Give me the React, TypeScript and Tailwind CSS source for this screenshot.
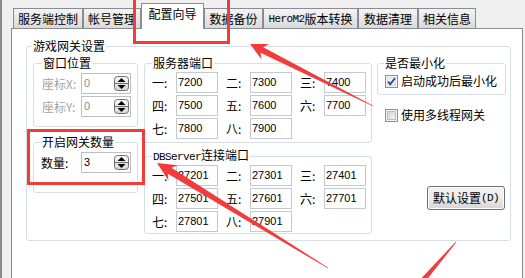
import React from 'react';

const CJK = "font-['Noto_Sans_CJK_SC','Noto_Sans_CJK_JP',sans-serif]";
const MONO = "font-['Liberation_Mono',monospace] text-[11px] tracking-[-0.6px]";
const RED = '#f23c3c';

function Spin() {
  return (
    <svg width="15" height="15" viewBox="0 0 15 15">
      <defs>
        <linearGradient id="sg" x1="0" y1="0" x2="0" y2="1">
          <stop offset="0" stopColor="#fafafa" />
          <stop offset="1" stopColor="#d4d4d4" />
        </linearGradient>
      </defs>
      <rect x="0.5" y="0.5" width="14" height="14" rx="3" fill="url(#sg)" stroke="#6e6e6e" />
      <line x1="1" y1="7.5" x2="14" y2="7.5" stroke="#6e6e6e" />
      <polygon points="3.5,6 11.5,6 7.5,2" fill="#000" />
      <polygon points="3.5,9 11.5,9 7.5,13" fill="#000" />
    </svg>
  );
}

function Check({ checked }: { checked?: boolean }) {
  return (
    <svg width="13" height="13" viewBox="0 0 13 13">
      <defs>
        <linearGradient id="cg" x1="0" y1="0" x2="1" y2="1">
          <stop offset="0" stopColor="#cfcfcf" />
          <stop offset="1" stopColor="#f7f7f7" />
        </linearGradient>
      </defs>
      <rect x="0.5" y="0.5" width="12" height="12" fill="#f4f4f4" stroke="#8e8f8f" />
      <rect x="2.5" y="2.5" width="8" height="8" fill={checked ? '#eef1f6' : 'url(#cg)'} stroke={checked ? '#d6dbe3' : '#bcbcbc'} />
      {checked && <path d="M3.2 6.6 L5.3 9.3 L9.9 3.2" stroke="#2a48a6" strokeWidth="1.9" fill="none" />}
    </svg>
  );
}

function SpinEdit({ value, disabled }: { value: string; disabled?: boolean }) {
  return (
    <div className="w-[50px] h-[21px] border border-[#b9bec7] bg-white flex items-center justify-between pl-[2px] pr-[1px]">
      <span className={`font-['Liberation_Sans',sans-serif] text-[11px] ${disabled ? 'text-[#8a8a8a]' : 'text-black'}`}>{value}</span>
      <Spin />
    </div>
  );
}

function PortCell({ label, value }: { label: string; value: string }) {
  return (
    <div className="flex items-center">
      <span className="w-[24px] text-[12px] leading-[14px]">{label}</span>
      <div className="w-[42px] h-[21px] border border-[#c3c8d1] bg-white flex items-center pl-[1px]">
        <span className="font-['Liberation_Sans',sans-serif] text-[11px]">{value}</span>
      </div>
    </div>
  );
}

function PortGrid({ rows }: { rows: [string, string][][] }) {
  return (
    <div className="flex flex-col gap-[2px] pl-[7px]">
      {rows.map((r, i) => (
        <div key={i} className="flex gap-[8px]">
          {r.map(([l, v]) => (
            <PortCell key={l} label={l} value={v} />
          ))}
        </div>
      ))}
    </div>
  );
}

function arrowPts(tx: number, ty: number, px: number, py: number, headLen: number, headW: number, shaftW: number) {
  const dx = px - tx;
  const dy = py - ty;
  const L = Math.hypot(dx, dy);
  const ux = dx / L;
  const uy = dy / L;
  const nx = -uy;
  const ny = ux;
  const b = (d: number, w: number) => `${tx + ux * d + nx * w},${ty + uy * d + ny * w}`;
  return [
    `${tx},${ty}`,
    b(headLen, headW),
    b(headLen * 0.78, shaftW / 2),
    `${px + nx * 0.4},${py + ny * 0.4}`,
    `${px - nx * 0.4},${py - ny * 0.4}`,
    b(headLen * 0.78, -shaftW / 2),
    b(headLen, -headW),
  ].join(' ');
}

const tabs: { label: React.ReactNode; cls: string; active?: boolean }[] = [
  { label: '服务端控制', cls: 'w-[70px]' },
  { label: '帐号管理', cls: 'w-[58px]' },
  { label: '配置向导', cls: 'w-[63px]', active: true },
  { label: '数据备份', cls: 'w-[59px]' },
  { label: <><span className={MONO}>HeroM2</span>版本转换</>, cls: 'w-[95px]' },
  { label: '数据清理', cls: 'w-[60px]' },
  { label: '相关信息', cls: 'w-[58px]' },
];

export default function App() {
  return (
    <div className={`relative w-[525px] h-[278px] overflow-hidden bg-[#f0f0f0] border-l-2 border-[#8a8a8a] text-black ${CJK}`}>
      {/* Tab strip */}
      <div className="h-[28px] ml-[11px] flex items-end">
        {tabs.map((t, i) =>
          t.active ? (
            <div
              key={i}
              className={`${t.cls} relative z-10 h-[26px] mb-[-1px] bg-white border border-b-0 border-[#898c95] flex justify-center pt-[3px] text-[12px] leading-[14px]`}
            >
              {t.label}
            </div>
          ) : (
            <div
              key={i}
              className={`${t.cls} h-[20px] bg-gradient-to-b from-[#f4f4f4] to-[#dadada] border border-b-0 border-[#898c95] flex items-center justify-center text-[12px] leading-[14px]`}
            >
              {t.label}
            </div>
          )
        )}
      </div>

      {/* Panel */}
      <div className="ml-[9px] w-[512px] h-[260px] bg-white border border-[#898c95] pt-[10px] pl-[14px]">
        <fieldset className="w-[485px] h-[202px] border border-[#d5dfe5] rounded-[3px] p-0 m-0 min-w-0">
          <legend className="ml-[5px] px-[1px] text-[12px] leading-[14px]">游戏网关设置</legend>
          <div className="flex ml-[6px] mt-[3px]">
            {/* Left column */}
            <div className="w-[105px] flex flex-col">
              <fieldset className="w-[105px] h-[71px] border border-[#d5dfe5] rounded-[3px] p-0 m-0 min-w-0">
                <legend className="ml-[8px] px-[1px] text-[12px] leading-[14px]">窗口位置</legend>
                <div className="flex flex-col gap-[2px] mt-[3px] pl-[8px]">
                  <div className="flex items-center">
                    <span className="w-[39px] text-[12px] leading-[14px] text-[#a3a3a3]">座标X:</span>
                    <SpinEdit value="0" disabled />
                  </div>
                  <div className="flex items-center">
                    <span className="w-[39px] text-[12px] leading-[14px] text-[#a3a3a3]">座标Y:</span>
                    <SpinEdit value="0" disabled />
                  </div>
                </div>
              </fieldset>
              <fieldset className="w-[105px] h-[58px] mt-[8px] border border-[#d5dfe5] rounded-[3px] p-0 m-0 min-w-0">
                <legend className="ml-[7px] px-[1px] text-[12px] leading-[14px]">开启网关数量</legend>
                <div className="flex items-center mt-[3px] pl-[7px]">
                  <span className="w-[40px] text-[12px] leading-[14px]">数量:</span>
                  <SpinEdit value="3" />
                </div>
              </fieldset>
            </div>

            {/* Middle column */}
            <div className="w-[228px] ml-[6px] flex flex-col">
              <fieldset className="w-[228px] h-[87px] border border-[#d5dfe5] rounded-[3px] p-0 m-0 min-w-0">
                <legend className="ml-[7px] px-[1px] text-[12px] leading-[14px]">服务器端口</legend>
                <div className="mt-[2px]">
                  <PortGrid
                    rows={[
                      [['一:', '7200'], ['二:', '7300'], ['三:', '7400']],
                      [['四:', '7500'], ['五:', '7600'], ['六:', '7700']],
                      [['七:', '7800'], ['八:', '7900']],
                    ]}
                  />
                </div>
              </fieldset>
              <fieldset className="w-[228px] h-[86px] mt-[5px] border border-[#d5dfe5] rounded-[3px] p-0 m-0 min-w-0">
                <legend className="ml-[7px] px-[1px] text-[12px] leading-[14px]">
                  <span className={MONO}>DBServer</span>连接端口
                </legend>
                <div className="mt-[1px]">
                  <PortGrid
                    rows={[
                      [['一:', '27201'], ['二:', '27301'], ['三:', '27401']],
                      [['四:', '27501'], ['五:', '27601'], ['六:', '27701']],
                      [['七:', '27801'], ['八:', '27901']],
                    ]}
                  />
                </div>
              </fieldset>
            </div>

            {/* Right column */}
            <div className="w-[129px] ml-[5px] flex flex-col">
              <fieldset className="w-[129px] h-[39px] border border-[#d5dfe5] rounded-[3px] p-0 m-0 min-w-0">
                <legend className="ml-[6px] px-[1px] text-[12px] leading-[14px]">是否最小化</legend>
                <div className="flex items-center gap-[3px] mt-[3px] pl-[7px] h-[16px]">
                  <Check checked />
                  <span className="text-[12px] leading-[14px]">启动成功后最小化</span>
                </div>
              </fieldset>
              <div className="flex items-center gap-[3px] mt-[12px] pl-[8px] h-[16px]">
                <Check />
                <span className="text-[12px] leading-[14px]">使用多线程网关</span>
              </div>
              <button className="ml-[50px] mt-[63px] w-[78px] h-[24px] border border-[#707070] rounded-[3px] bg-gradient-to-b from-[#f3f3f3] via-[#ebebeb] to-[#d5d5d5] shadow-[inset_0_0_0_1px_#fcfcfc] flex items-center justify-center text-[12px] leading-[14px]">
                默认设置<span className={MONO}>(D)</span>
              </button>
            </div>
          </div>
        </fieldset>
      </div>

      {/* Annotations */}
      <div className="absolute left-[131px] top-[-3px] w-[97px] h-[47px] border-[3px] border-[#f23c3c] pointer-events-none" />
      <div className="absolute left-[25px] top-[129px] w-[118px] h-[56px] border-[3px] border-[#f23c3c] pointer-events-none" />
      <svg className="absolute left-[-2px] top-0 pointer-events-none" width="525" height="278" viewBox="0 0 525 278">
        <polygon points={arrowPts(250, 44, 373, 106, 17, 8.5, 6)} fill={RED} />
        <polygon points={arrowPts(157, 163, 328, 268, 19, 9, 7)} fill={RED} />
        <polygon points={arrowPts(400, 307, 456, 242, 19, 9, 7)} fill={RED} />
      </svg>
    </div>
  );
}
